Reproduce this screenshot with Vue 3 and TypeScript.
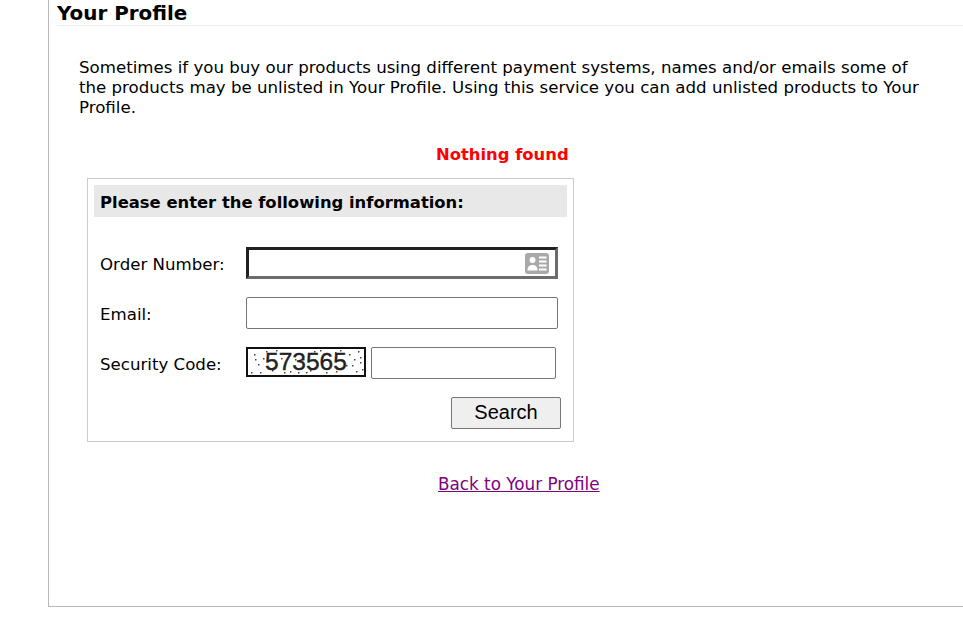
<script setup lang="ts">
// noise dots over the captcha, fixed so every render is the same
const dots: [number, number][] = [
  [6, 5], [7, 10], [10, 15], [12, 23], [3, 23], [18, 2], [28, 1], [36, 23], [42, 22], [47, 10],
  [50, 23], [58, 23], [62, 21], [66, 2], [72, 1], [78, 23], [88, 22], [92, 1], [98, 16],
  [101, 5], [104, 16], [108, 22], [112, 8], [114, 20], [112, 13], [24, 21], [33, 9], [55, 10], [76, 10],
  [87, 3], [95, 11], [110, 2], [15, 9], [106, 10]
]
</script>

<template>
  <div class="page">
    <main class="panel">
      <h1 class="title">Your Profile</h1>
      <div class="content">
        <p class="intro">
          Sometimes if you buy our products using different payment systems, names and/or emails some of
          the products may be unlisted in Your Profile. Using this service you can add unlisted products to Your
          Profile.
        </p>
        <div class="status">Nothing found</div>
        <form class="box" @submit.prevent>
          <div class="box-head">Please enter the following information:</div>
          <div class="rows">
            <label class="row">
              <span class="label">Order Number:</span>
              <span class="focus-field">
                <input class="bare" type="text" aria-label="Order Number" />
                <svg class="card-icon" width="24" height="21" viewBox="0 0 24 21">
                  <rect width="24" height="21" rx="3" fill="#a9a9a9" />
                  <circle cx="7.5" cy="7" r="3" fill="#fff" />
                  <path d="M2.5 17.5c0-4 2-5.5 5-5.5s5 1.5 5 5.5z" fill="#fff" />
                  <path d="M14 4.5h7.5M14 8.5h7.5M14 12.5h7.5M14 16.5h7.5" stroke="#fff" stroke-width="1.8" />
                </svg>
              </span>
            </label>
            <label class="row">
              <span class="label">Email:</span>
              <input class="field" type="text" />
            </label>
            <label class="row">
              <span class="label">Security Code:</span>
              <span class="captcha">
                <svg class="noise" width="116" height="26" viewBox="0 0 116 26">
                  <rect v-for="(d, i) in dots" :key="i" :x="d[0]" :y="d[1]" width="1.5" height="1.5" fill="#444" />
                </svg>
                <span class="captcha-text">573565</span>
              </span>
              <input class="field code" type="text" />
            </label>
          </div>
          <div class="actions">
            <button class="search" type="submit">Search</button>
          </div>
        </form>
        <div class="back"><a href="#">Back to Your Profile</a></div>
      </div>
    </main>
  </div>
</template>

<style>
html, body {
  background: #fff;
}
</style>

<style scoped>
.page {
  height: 621px;
  padding-left: 48px;
  box-sizing: border-box;
  overflow: hidden;
  font-family: "DejaVu Sans", Verdana, sans-serif;
  font-size: 16.64px;
  color: #000;
}
.panel {
  height: 607px;
  box-sizing: border-box;
  border-left: 1px solid #b9b9b9;
  border-bottom: 1px solid #b9b9b9;
  padding-left: 8px;
}
.title {
  margin: 0;
  height: 26px;
  box-sizing: border-box;
  border-bottom: 1px solid #eee;
  font-size: 19.9px;
  line-height: 27px;
  font-weight: 700;
}
.content {
  padding: 32px 0 0 22px;
}
.intro {
  margin: 0;
  width: 848px;
  line-height: 20px;
}
.status {
  margin: 27px 0 0 357px;
  color: #f00;
  font-size: 16.4px;
  font-weight: 700;
  line-height: 20px;
}
.box {
  margin: 13px 0 0 8px;
  width: 487px;
  height: 264px;
  box-sizing: border-box;
  border: 1px solid #ccc;
  padding: 6px;
}
.box-head {
  height: 32px;
  background: #e8e8e8;
  padding-left: 6px;
  font-size: 16.4px;
  font-weight: 700;
  line-height: 35px;
}
.rows {
  display: flex;
  flex-direction: column;
  gap: 18px;
  padding: 30px 0 0 6px;
}
.row {
  display: flex;
  align-items: flex-start;
  height: 32px;
  line-height: 36px;
}
.label {
  width: 146px;
  flex: none;
}
.field {
  width: 312px;
  height: 32px;
  box-sizing: border-box;
  border: 1px solid #767676;
  border-radius: 2px;
  background: #fff;
  outline: none;
  padding: 0 2px;
}
.focus-field {
  display: flex;
  align-items: center;
  width: 312px;
  height: 32px;
  box-sizing: border-box;
  border-style: solid;
  border-width: 3px;
  border-color: #212121 #6c6c6c #6c6c6c #212121;
  padding-right: 6px;
}
.bare {
  flex: 1;
  min-width: 0;
  border: 0;
  outline: none;
  background: transparent;
}
.card-icon {
  flex: none;
}
.captcha {
  position: relative;
  flex: none;
  width: 120px;
  height: 30px;
  box-sizing: border-box;
  border: 2px solid #111;
  background: #fff;
  margin-right: 5px;
  text-align: center;
  overflow: hidden;
}
.noise {
  position: absolute;
  left: 0;
  top: 0;
}
.captcha-text {
  position: relative;
  font-family: "Liberation Sans", sans-serif;
  font-size: 24.5px;
  line-height: 26px;
  display: block;
  color: #222;
  -webkit-text-stroke: 0.4px #222;
}
.code {
  width: 185px;
}
.actions {
  display: flex;
  justify-content: flex-end;
  margin: 18px 0 0 0;
  padding-right: 6px;
}
.search {
  width: 110px;
  height: 32px;
  border: 1px solid #767676;
  border-radius: 2px;
  background: #efefef;
  color: #000;
  font-family: "Liberation Sans", Arial, sans-serif;
  font-size: 20px;
  padding: 0 0 2px;
}
.back {
  margin-top: 32px;
  padding-left: 359px;
  font-size: 16.8px;
  line-height: 20px;
}
.back a {
  color: #800080;
}
</style>
